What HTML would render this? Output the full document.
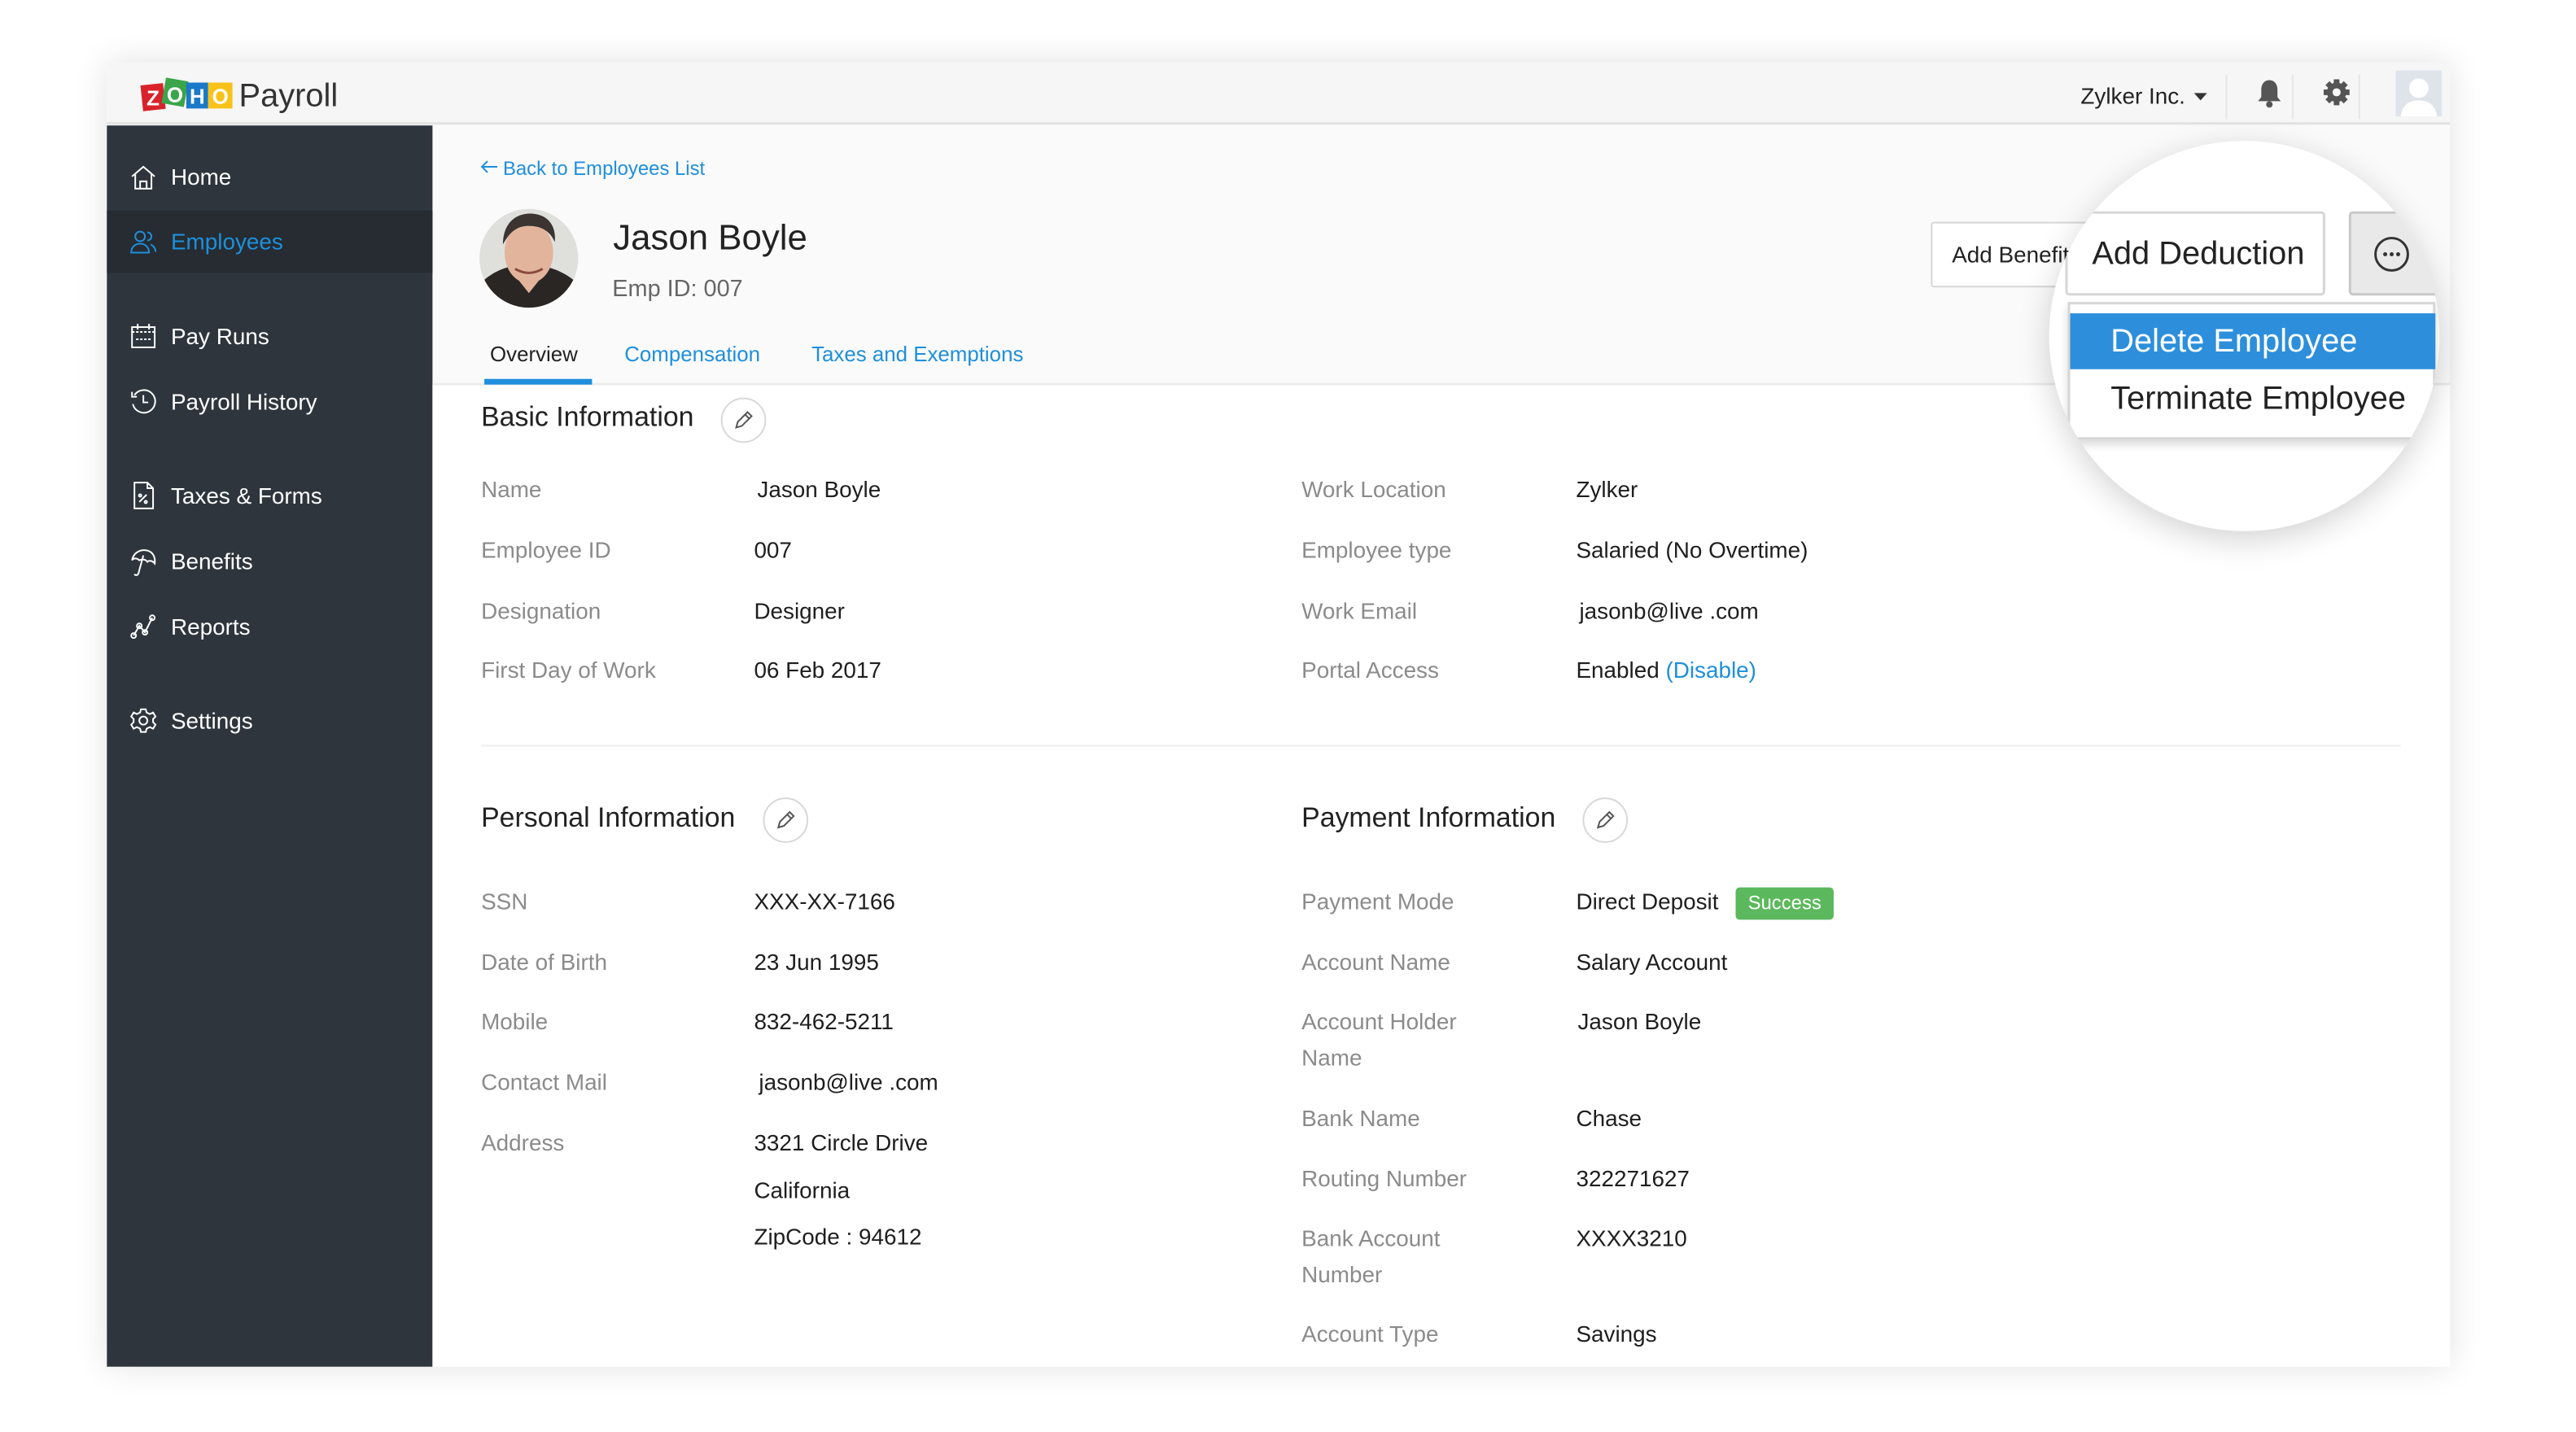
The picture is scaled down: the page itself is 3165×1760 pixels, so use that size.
<!DOCTYPE html>
<html><head><meta charset="utf-8"><style>
*{margin:0;padding:0;box-sizing:border-box}
body{width:3165px;height:1760px;background:#fff;position:relative;overflow:hidden;font-family:"Liberation Sans",sans-serif}
#w{position:absolute;left:0;top:0;width:3165px;height:1760px;transform:scale(0.9951);transform-origin:0 0}
.a{position:absolute;white-space:nowrap}
#frame{position:absolute;left:132px;top:77px;width:2893px;height:1611px;background:#fafafa;box-shadow:0 0 40px rgba(0,0,0,.12)}
#hdr{position:absolute;left:132px;top:77px;width:2893px;height:77px;background:#f6f6f6;border-bottom:3px solid #e2e2e2}
#side{position:absolute;left:132px;top:155px;width:402px;height:1533px;background:#2e353c}
.nav{position:absolute;left:211px;color:#fff;font-size:28px;line-height:40px}
.ic{position:absolute;left:160px}
.lbl{position:absolute;color:#8b8b8b;font-size:28px;line-height:40px}
.val{position:absolute;color:#1e1e1e;font-size:28px;line-height:40px}
.blue{color:#1e8fdc}
.edit{position:absolute;width:56px;height:56px;border:2px solid #d8d8d8;border-radius:50%;background:#fff}
.h2{position:absolute;font-size:34px;color:#222;line-height:44px}
</style></head><body><div id="w">
<div id="frame"></div>
<div id="hdr"></div>
<svg class="a" style="left:172px;top:92px" width="120" height="50" viewBox="0 0 120 50">
<g font-family="Liberation Sans" font-weight="bold" font-size="26" fill="#fff" text-anchor="middle">
<rect x="3" y="12" width="28" height="32" fill="#d8232a" transform="rotate(-6 17 28)"/><text x="17" y="38">Z</text>
<rect x="30" y="6" width="28" height="32" fill="#3aa54a" transform="rotate(10 44 22)"/><text x="44" y="34">O</text>
<rect x="58" y="10" width="27" height="32" fill="#1a79c8"/><text x="71.5" y="36">H</text>
<rect x="85" y="10" width="30" height="32" fill="#f9c21a"/><text x="100" y="36">O</text>
</g></svg>
<div class="a" style="left:295px;top:96px;font-size:40px;color:#333;line-height:44px">Payroll</div>
<div class="a" style="left:2569px;top:99px;font-size:28px;color:#222;line-height:40px">Zylker Inc.</div>
<svg class="a" style="left:2707px;top:113px" width="20" height="12"><path d="M2 2h16l-8 9z" fill="#333"/></svg>
<div class="a" style="left:2748px;top:92px;width:2px;height:55px;background:#e6e6e6"></div>
<svg class="a" style="left:2786px;top:96px" width="32" height="40" viewBox="0 0 32 40"><path d="M16 3c-7 0-10 6-10 12v9l-4 5h28l-4-5v-9c0-6-3-12-10-12z" fill="#555"/><circle cx="16" cy="33" r="4" fill="#555"/></svg>
<div class="a" style="left:2830px;top:92px;width:2px;height:55px;background:#e6e6e6"></div>
<svg class="a" style="left:2867px;top:96px" width="36" height="36" viewBox="0 0 36 36"><g fill="#555"><circle cx="18" cy="18" r="12"/><g stroke="#555" stroke-width="7"><line x1="18" y1="2" x2="18" y2="34"/><line x1="2" y1="18" x2="34" y2="18"/><line x1="6.7" y1="6.7" x2="29.3" y2="29.3"/><line x1="29.3" y1="6.7" x2="6.7" y2="29.3"/></g></g><circle cx="18" cy="18" r="5" fill="#f6f6f6"/></svg>
<div class="a" style="left:2912px;top:92px;width:2px;height:55px;background:#e6e6e6"></div>
<svg class="a" style="left:2958px;top:87px" width="57" height="57" viewBox="0 0 57 57"><rect width="57" height="57" fill="#dfe3ea"/><circle cx="28.5" cy="22" r="12" fill="#fff"/><path d="M6 57c2-14 10-20 22.5-20S49 43 51 57z" fill="#fff"/></svg>

<div id="side"></div>
<div class="a" style="left:132px;top:260px;width:402px;height:77px;background:#262c32"></div>
<svg class="ic" style="top:202px" width="34" height="34" viewBox="0 0 34 34" fill="none" stroke="#fff" stroke-width="2"><path d="M3 16L17 4l14 12M7 13v18h20V13M13 31v-9h8v9"/></svg>
<div class="nav" style="top:199px">Home</div>
<svg class="ic" style="top:282px" width="34" height="34" viewBox="0 0 34 34" fill="none" stroke="#1e8fdc" stroke-width="2"><circle cx="13" cy="10" r="6"/><path d="M2 30c0-7 5-11 11-11s11 4 11 11zM22 5a5 5 0 010 10M26 20c4 2 6 5 6 9"/></svg>
<div class="nav blue" style="top:279px">Employees</div>
<svg class="ic" style="top:398px" width="34" height="34" viewBox="0 0 34 34" fill="none" stroke="#fff" stroke-width="2"><rect x="3" y="6" width="28" height="25"/><path d="M3 12h28M10 2v7M24 2v7M8 21h18" stroke-dasharray="3 2"/></svg>
<div class="nav" style="top:396px">Pay Runs</div>
<svg class="ic" style="top:479px" width="34" height="34" viewBox="0 0 34 34" fill="none" stroke="#fff" stroke-width="2"><path d="M6 9A14 14 0 1 1 4 20"/><path d="M17 9v9h6M3 5v6h6"/></svg>
<div class="nav" style="top:477px">Payroll History</div>
<svg class="ic" style="top:594px" width="34" height="36" viewBox="0 0 34 36" fill="none" stroke="#fff" stroke-width="2"><path d="M6 2h16l7 7v25H6zM22 2v7h7M12 26l9-9"/><circle cx="13" cy="18" r="1.5"/><circle cx="20" cy="26" r="1.5"/></svg>
<div class="nav" style="top:593px">Taxes &amp; Forms</div>
<svg class="ic" style="top:676px" width="34" height="36" viewBox="0 0 34 36" fill="none" stroke="#fff" stroke-width="2"><path d="M3 16C5 6 14 2 22 4s10 10 9 16c-3-4-7-4-9-2-2-3-6-4-10-2-3-3-7-3-9 0zM17 10l-6 22c-1 3-4 3-5 1"/></svg>
<div class="nav" style="top:674px">Benefits</div>
<svg class="ic" style="top:757px" width="34" height="34" viewBox="0 0 34 34" fill="none" stroke="#fff" stroke-width="2"><path d="M5 28l7-12 7 8 9-18"/><circle cx="5" cy="28" r="3"/><circle cx="12" cy="16" r="3"/><circle cx="19" cy="24" r="3"/><circle cx="28" cy="6" r="3"/></svg>
<div class="nav" style="top:755px">Reports</div>
<svg class="ic" style="top:873px" width="34" height="34" viewBox="0 0 34 34" fill="none" stroke="#fff" stroke-width="2"><circle cx="17" cy="17" r="5"/><path d="M14 3h6l1 4 4 2 4-2 3 5-3 3v4l3 3-3 5-4-2-4 2-1 4h-6l-1-4-4-2-4 2-3-5 3-3v-4l-3-3 3-5 4 2 4-2z"/></svg>
<div class="nav" style="top:871px">Settings</div>

<svg class="a" style="left:592px;top:196px" width="24" height="20"><path d="M22 10H3M10 3L3 10l7 7" fill="none" stroke="#1e8fdc" stroke-width="2"/></svg>
<div class="a blue" style="left:621px;top:193px;font-size:24px;line-height:32px">Back to Employees List</div>
<svg class="a" style="left:591px;top:257px" width="124" height="124" viewBox="0 0 124 124"><defs><clipPath id="c"><circle cx="62" cy="62" r="61"/></clipPath></defs><g clip-path="url(#c)"><rect width="124" height="124" fill="#dfe0dc"/><path d="M0 95c20-20 40-25 62-25s45 8 62 25v30H0z" fill="#2a2624"/><ellipse cx="62" cy="55" rx="30" ry="38" fill="#e2b49c"/><path d="M30 45c0-30 20-40 38-38s28 15 26 35c-5-12-15-20-32-20s-25 10-32 23z" fill="#3b3431"/><path d="M45 75q17 10 34 0" stroke="#8a4a40" stroke-width="3" fill="none"/><path d="M50 90l12 15 12-15" fill="#e2b49c"/></g></svg>
<div class="a" style="left:757px;top:268px;font-size:44px;color:#222;line-height:52px">Jason Boyle</div>
<div class="a" style="left:756px;top:339px;font-size:29px;color:#666;line-height:36px">Emp ID: 007</div>
<div class="a" style="left:605px;top:420px;font-size:26px;color:#222;line-height:34px">Overview</div>
<div class="a blue" style="left:771px;top:420px;font-size:26px;line-height:34px">Compensation</div>
<div class="a blue" style="left:1002px;top:420px;font-size:26px;line-height:34px">Taxes and Exemptions</div>
<div class="a" style="left:534px;top:473px;width:2491px;height:3px;background:#ececec"></div>
<div class="a" style="left:598px;top:468px;width:133px;height:7px;background:#1e8fdc"></div>
<div class="a" style="left:534px;top:476px;width:2491px;height:1212px;background:#fff"></div>

<div class="h2" style="left:594px;top:493px">Basic Information</div>
<div class="edit" style="left:890px;top:491px"></div>
<svg class="a" style="left:905px;top:506px" width="26" height="26" viewBox="0 0 26 26" fill="none" stroke="#555" stroke-width="2"><path d="M4 22l2-7 12-12 5 5-12 12zM15 6l5 5"/></svg>

<div class="lbl" style="left:594px;top:585px">Name</div><div class="val" style="left:935px;top:585px">Jason Boyle</div>
<div class="lbl" style="left:594px;top:660px">Employee ID</div><div class="val" style="left:931px;top:660px">007</div>
<div class="lbl" style="left:594px;top:735px">Designation</div><div class="val" style="left:931px;top:735px">Designer</div>
<div class="lbl" style="left:594px;top:808px">First Day of Work</div><div class="val" style="left:931px;top:808px">06 Feb 2017</div>
<div class="lbl" style="left:1607px;top:585px">Work Location</div><div class="val" style="left:1946px;top:585px">Zylker</div>
<div class="lbl" style="left:1607px;top:660px">Employee type</div><div class="val" style="left:1946px;top:660px">Salaried (No Overtime)</div>
<div class="lbl" style="left:1607px;top:735px">Work Email</div><div class="val" style="left:1950px;top:735px">jasonb@live .com</div>
<div class="lbl" style="left:1607px;top:808px">Portal Access</div><div class="val" style="left:1946px;top:808px">Enabled <span class="blue">(Disable)</span></div>

<div class="a" style="left:594px;top:920px;width:2370px;height:2px;background:#ececec"></div>

<div class="h2" style="left:594px;top:988px">Personal Information</div>
<div class="edit" style="left:942px;top:985px"></div>
<svg class="a" style="left:957px;top:1000px" width="26" height="26" viewBox="0 0 26 26" fill="none" stroke="#555" stroke-width="2"><path d="M4 22l2-7 12-12 5 5-12 12zM15 6l5 5"/></svg>
<div class="h2" style="left:1607px;top:988px">Payment Information</div>
<div class="edit" style="left:1954px;top:985px"></div>
<svg class="a" style="left:1969px;top:1000px" width="26" height="26" viewBox="0 0 26 26" fill="none" stroke="#555" stroke-width="2"><path d="M4 22l2-7 12-12 5 5-12 12zM15 6l5 5"/></svg>

<div class="lbl" style="left:594px;top:1094px">SSN</div><div class="val" style="left:931px;top:1094px">XXX-XX-7166</div>
<div class="lbl" style="left:594px;top:1169px">Date of Birth</div><div class="val" style="left:931px;top:1169px">23 Jun 1995</div>
<div class="lbl" style="left:594px;top:1242px">Mobile</div><div class="val" style="left:931px;top:1242px">832-462-5211</div>
<div class="lbl" style="left:594px;top:1317px">Contact Mail</div><div class="val" style="left:937px;top:1317px">jasonb@live .com</div>
<div class="lbl" style="left:594px;top:1392px">Address</div>
<div class="val" style="left:931px;top:1392px">3321 Circle Drive</div>
<div class="val" style="left:931px;top:1451px">California</div>
<div class="val" style="left:931px;top:1508px">ZipCode : 94612</div>

<div class="lbl" style="left:1607px;top:1094px">Payment Mode</div><div class="val" style="left:1946px;top:1094px">Direct Deposit</div>
<div class="a" style="left:2143px;top:1096px;width:121px;height:40px;background:#5cb85c;border-radius:5px;color:#fff;font-size:24px;line-height:40px;text-align:center">Success</div>
<div class="lbl" style="left:1607px;top:1169px">Account Name</div><div class="val" style="left:1946px;top:1169px">Salary Account</div>
<div class="lbl" style="left:1607px;top:1242px">Account Holder</div><div class="val" style="left:1948px;top:1242px">Jason Boyle</div>
<div class="lbl" style="left:1607px;top:1287px">Name</div>
<div class="lbl" style="left:1607px;top:1362px">Bank Name</div><div class="val" style="left:1946px;top:1362px">Chase</div>
<div class="lbl" style="left:1607px;top:1436px">Routing Number</div><div class="val" style="left:1946px;top:1436px">322271627</div>
<div class="lbl" style="left:1607px;top:1510px">Bank Account</div><div class="val" style="left:1946px;top:1510px">XXXX3210</div>
<div class="lbl" style="left:1607px;top:1555px">Number</div>
<div class="lbl" style="left:1607px;top:1628px">Account Type</div><div class="val" style="left:1946px;top:1628px">Savings</div>

<div class="a" style="left:2384px;top:274px;width:200px;height:81px;border:2px solid #d6d6d6;border-radius:4px;background:#fff;overflow:hidden;font-size:28px;line-height:77px;padding-left:24px;color:#222">Add Benefit</div>
<div class="a" style="left:2530px;top:174px;width:482px;height:482px;border-radius:50%;background:#fff;box-shadow:0 10px 40px rgba(0,0,0,.18);overflow:hidden">
 <div class="a" style="left:20px;top:87px;width:321px;height:104px;border:3px solid #d6d6d6;border-radius:5px;background:#fff;font-size:40px;line-height:98px;padding-left:30px;color:#222">Add Deduction</div>
 <div class="a" style="left:370px;top:87px;width:110px;height:104px;border:3px solid #c8c8c8;border-radius:5px;background:#e9e9e9"></div>
 <svg class="a" style="left:400px;top:117px" width="46" height="46" viewBox="0 0 46 46"><circle cx="23" cy="23" r="20" fill="none" stroke="#333" stroke-width="3"/><circle cx="15" cy="23" r="2.5" fill="#333"/><circle cx="23" cy="23" r="2.5" fill="#333"/><circle cx="31" cy="23" r="2.5" fill="#333"/></svg>
 <div class="a" style="left:23px;top:199px;width:454px;height:170px;border:3px solid #d6d6d6;background:#fff;box-shadow:0 6px 10px rgba(0,0,0,.15)"></div>
 <div class="a" style="left:26px;top:213px;width:451px;height:69px;background:#2d8fdb;color:#fff;font-size:40px;line-height:69px;padding-left:50px">Delete Employee</div>
 <div class="a" style="left:26px;top:288px;font-size:40px;line-height:60px;padding-left:50px;color:#222">Terminate Employee</div>
</div>
</div></body></html>
